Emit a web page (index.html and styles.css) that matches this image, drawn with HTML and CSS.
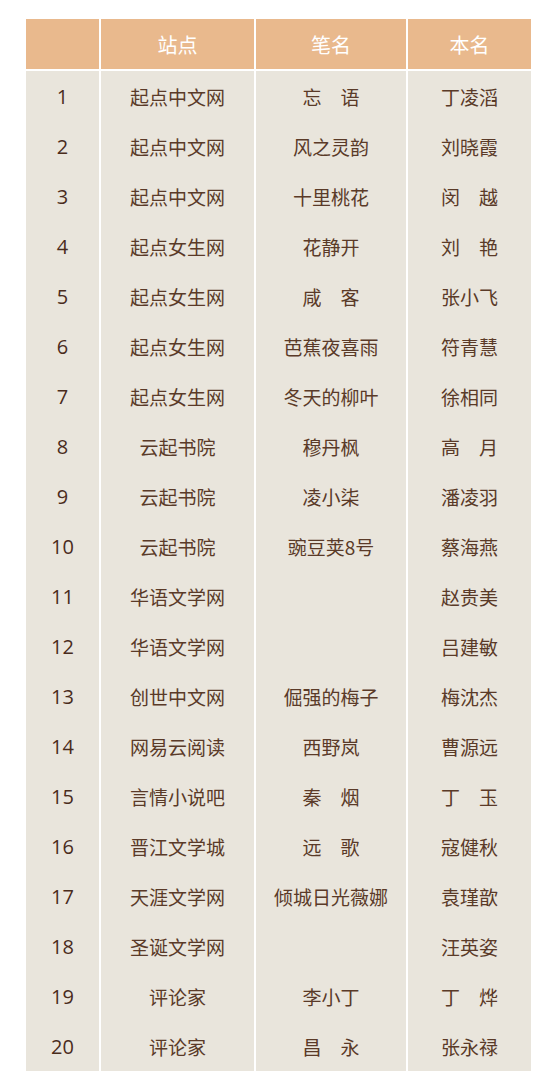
FILE: index.html
```html
<!DOCTYPE html>
<html lang="zh-CN">
<head>
<meta charset="utf-8">
<title>作家名单</title>
<link rel="stylesheet" href="styles.css">
</head>
<body>
<div class="page">
  <div class="table">
    <div class="th"></div><div class="th">站点</div><div class="th">笔名</div><div class="th">本名</div>
    <div class="td num">1</div><div class="td">起点中文网</div><div class="td">忘　语</div><div class="td">丁凌滔</div>
    <div class="td num">2</div><div class="td">起点中文网</div><div class="td">风之灵韵</div><div class="td">刘晓霞</div>
    <div class="td num">3</div><div class="td">起点中文网</div><div class="td">十里桃花</div><div class="td">闵　越</div>
    <div class="td num">4</div><div class="td">起点女生网</div><div class="td">花静开</div><div class="td">刘　艳</div>
    <div class="td num">5</div><div class="td">起点女生网</div><div class="td">咸　客</div><div class="td">张小飞</div>
    <div class="td num">6</div><div class="td">起点女生网</div><div class="td">芭蕉夜喜雨</div><div class="td">符青慧</div>
    <div class="td num">7</div><div class="td">起点女生网</div><div class="td">冬天的柳叶</div><div class="td">徐相同</div>
    <div class="td num">8</div><div class="td">云起书院</div><div class="td">穆丹枫</div><div class="td">高　月</div>
    <div class="td num">9</div><div class="td">云起书院</div><div class="td">凌小柒</div><div class="td">潘凌羽</div>
    <div class="td num">10</div><div class="td">云起书院</div><div class="td">豌豆荚8号</div><div class="td">蔡海燕</div>
    <div class="td num">11</div><div class="td">华语文学网</div><div class="td"></div><div class="td">赵贵美</div>
    <div class="td num">12</div><div class="td">华语文学网</div><div class="td"></div><div class="td">吕建敏</div>
    <div class="td num">13</div><div class="td">创世中文网</div><div class="td">倔强的梅子</div><div class="td">梅沈杰</div>
    <div class="td num">14</div><div class="td">网易云阅读</div><div class="td">西野岚</div><div class="td">曹源远</div>
    <div class="td num">15</div><div class="td">言情小说吧</div><div class="td">秦　烟</div><div class="td">丁　玉</div>
    <div class="td num">16</div><div class="td">晋江文学城</div><div class="td">远　歌</div><div class="td">寇健秋</div>
    <div class="td num">17</div><div class="td">天涯文学网</div><div class="td">倾城日光薇娜</div><div class="td">袁瑾歆</div>
    <div class="td num">18</div><div class="td">圣诞文学网</div><div class="td"></div><div class="td">汪英姿</div>
    <div class="td num">19</div><div class="td">评论家</div><div class="td">李小丁</div><div class="td">丁　烨</div>
    <div class="td num">20</div><div class="td">评论家</div><div class="td">昌　永</div><div class="td">张永禄</div>
  </div>
</div>
</body>
</html>
```
FILE: styles.css
```css
html, body {
  margin: 0;
  padding: 0;
  background: #ffffff;
}
.page {
  padding: 19px 0 0 26px;
}
.table {
  display: grid;
  grid-template-columns: 73px 153px 150px 123px;
  column-gap: 2px;
  width: 505px;
  font-family: "Noto Sans CJK SC", "Liberation Sans", sans-serif;
  font-size: 19px;
}
.th {
  height: 50px;
  margin-bottom: 2px;
  background: #e9b98d;
  color: #ffffff;
  font-size: 20px;
  display: flex;
  align-items: center;
  justify-content: center;
}
.td {
  height: 50px;
  background: #e9e5dc;
  color: #5a3a28;
  display: flex;
  align-items: center;
  justify-content: center;
  white-space: nowrap;
}
.num {
  font-family: "Open Sans", "Liberation Sans", sans-serif;
  color: #4a2c1c;
  font-size: 20px;
}
```
